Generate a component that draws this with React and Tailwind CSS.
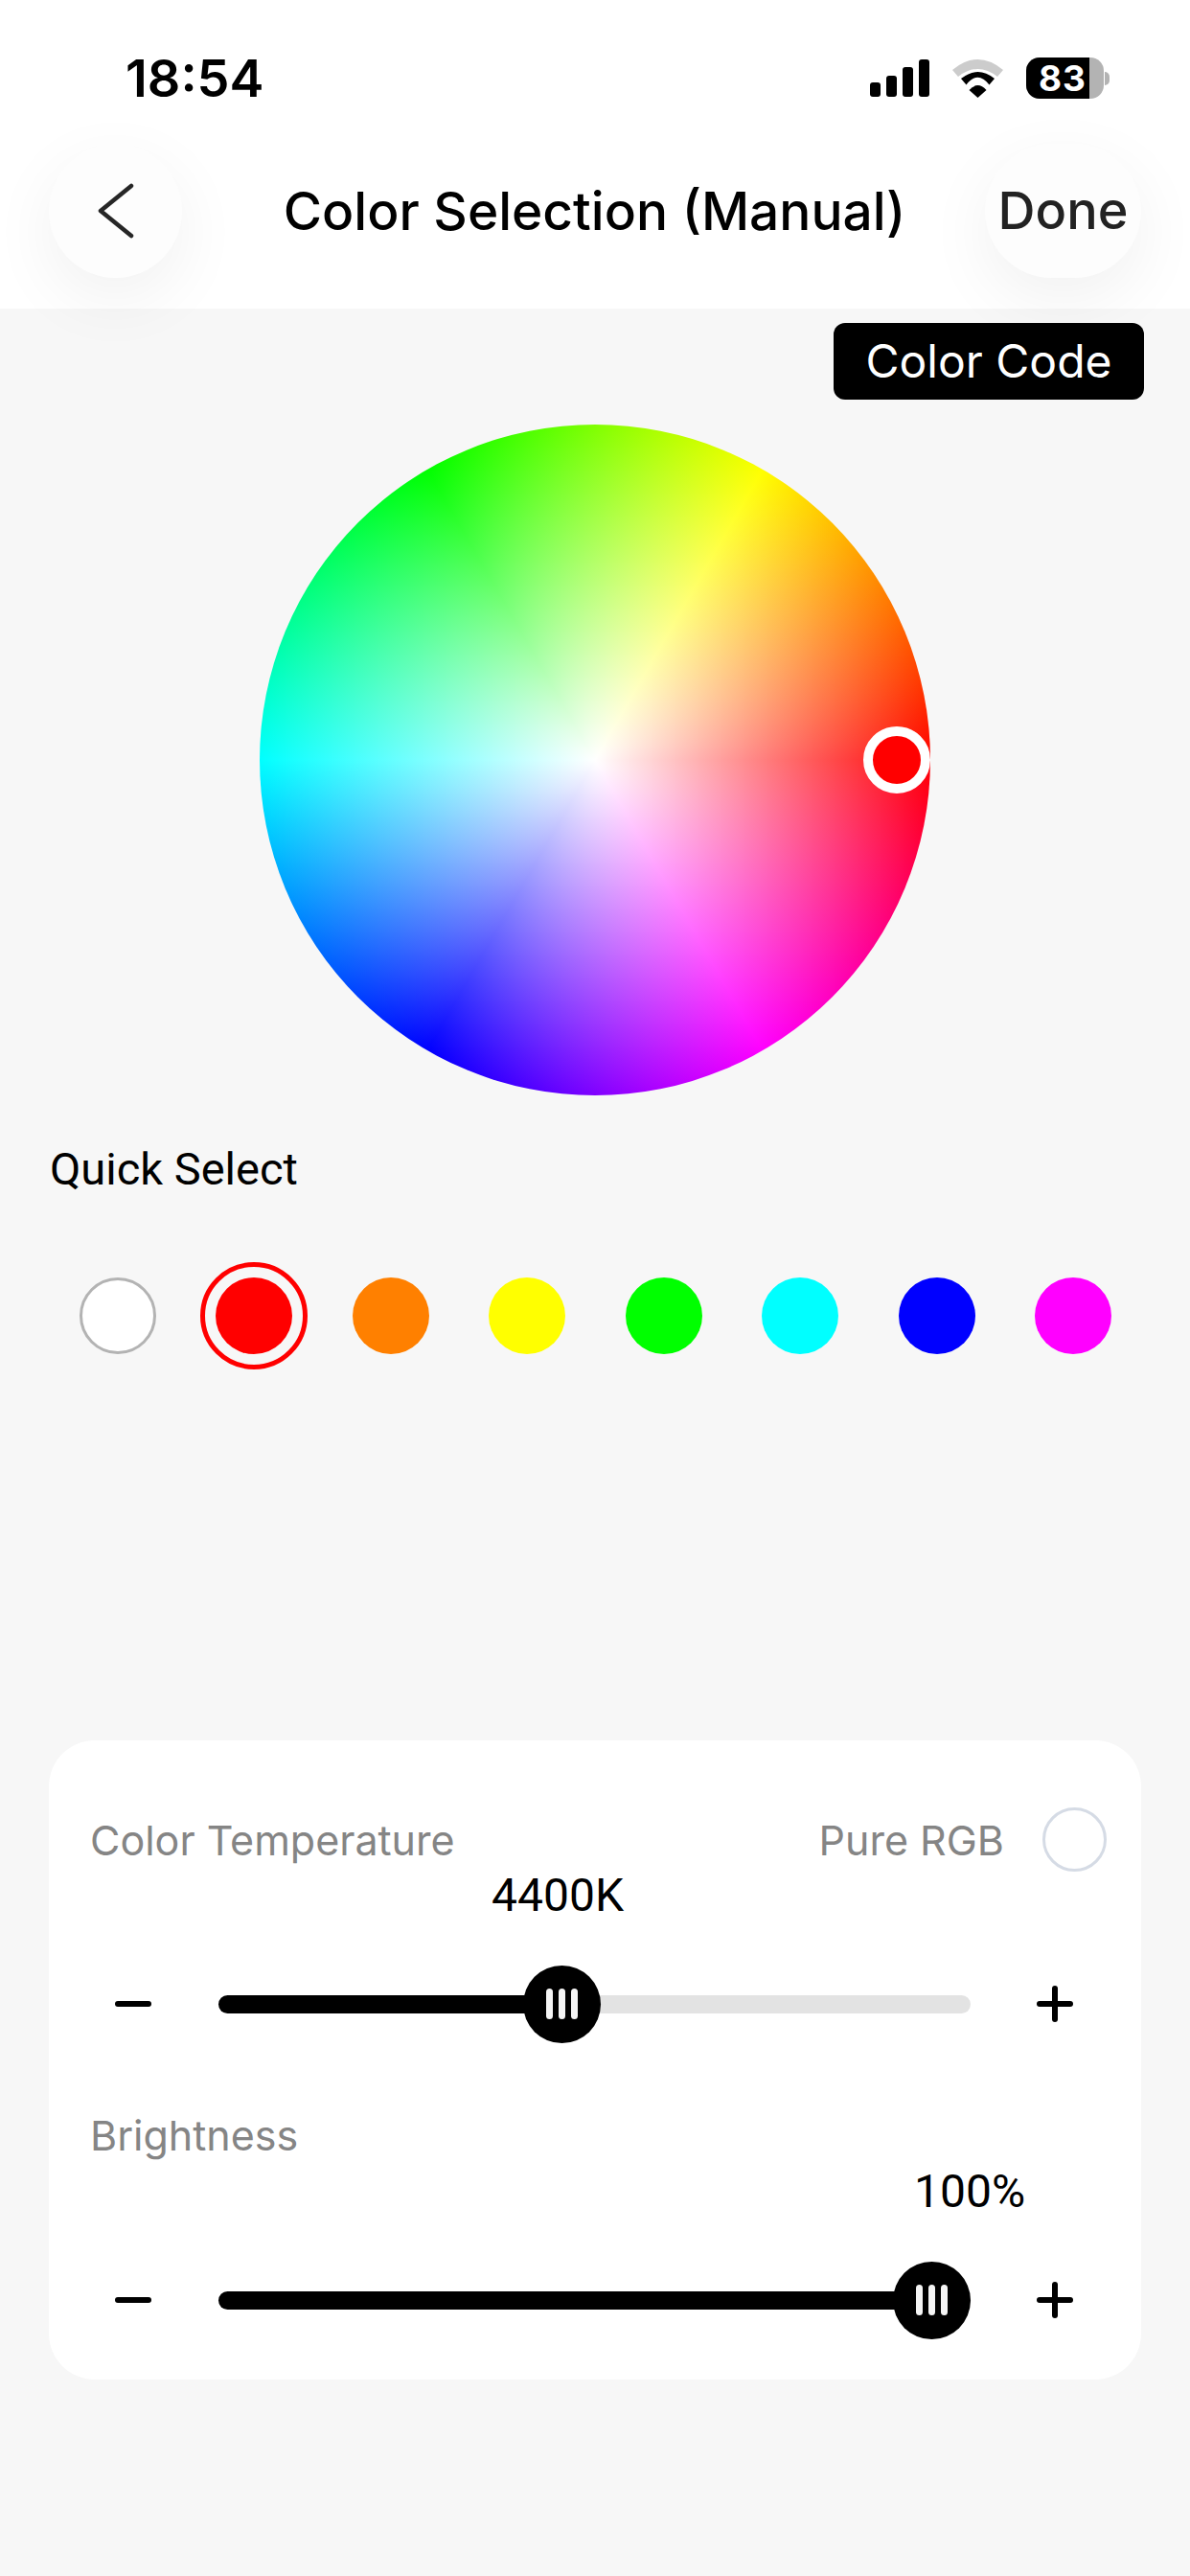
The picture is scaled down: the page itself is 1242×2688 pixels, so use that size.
const swatches = [
  { name: 'white', className: 'bg-white border-[3px] border-[#b3b3b3]' },
  { name: 'red', className: 'bg-[#ff0000] outline-[5px] outline-offset-[11px] outline-[#ff0000]' },
  { name: 'orange', className: 'bg-[#ff8000]' },
  { name: 'yellow', className: 'bg-[#ffff00]' },
  { name: 'green', className: 'bg-[#00ff00]' },
  { name: 'cyan', className: 'bg-[#00ffff]' },
  { name: 'blue', className: 'bg-[#0000ff]' },
  { name: 'magenta', className: 'bg-[#ff00ff]' },
];

function StatusBar() {
  return (
    <div className="flex h-[43px] items-center justify-between pl-[131px] pr-[84px]">
      <span className="text-[54px] font-semibold leading-[43px] text-black">18:54</span>
      <div className="flex items-center">
        <svg width="62" height="39" viewBox="0 0 62 39" fill="#000">
          <rect x="0" y="24" width="11" height="15" rx="3" />
          <rect x="17" y="17" width="11" height="22" rx="3" />
          <rect x="34" y="8" width="11" height="31" rx="3" />
          <rect x="51" y="0" width="11" height="39" rx="3" />
        </svg>
        <svg className="ml-[24px]" width="53" height="40" viewBox="0 0 53 40">
          <path d="M0 11Q26.5 -11 53 11L47 18Q26.5 2 6 18Z" fill="#cccccc" />
          <path d="M9 20Q26.5 6 44 20L38.5 26.5Q26.5 11 14.5 26.5Z" fill="#000" />
          <path d="M17.5 32Q26.5 22 35.5 32L26.5 40Z" fill="#000" />
        </svg>
        <div className="ml-[24px] flex items-center">
          <div className="flex h-[43px] w-[81px] overflow-hidden rounded-[14px] bg-[#b3b3b3]">
            <div className="flex w-[66px] items-center justify-center bg-black pl-[10px] text-[37px] font-bold leading-none tracking-[1px] text-white">
              83
            </div>
          </div>
          <div className="ml-[1px] h-[14px] w-[5px] rounded-r-full bg-[#b3b3b3]" />
        </div>
      </div>
    </div>
  );
}

function Header() {
  return (
    <div className="relative h-[322px] shrink-0 bg-white pt-[60px]">
      <StatusBar />
      <div className="mt-[47px] flex h-[140px] items-center px-[51px]">
        <button className="flex h-[140px] w-[139px] items-center justify-center rounded-full bg-[#fdfdfd] shadow-[0_22px_70px_rgba(0,0,0,0.06)]">
          <svg width="38" height="58" viewBox="0 0 38 58" fill="none" stroke="#262626" strokeWidth="4.5" strokeLinecap="round" strokeLinejoin="round">
            <path d="M35 3L3 29L35 55" />
          </svg>
        </button>
        <div className="flex-1 pl-[23px] text-center text-[55px] font-medium leading-[70px] text-black">
          Color Selection (Manual)
        </div>
        <button className="flex h-[140px] w-[163px] items-center justify-center rounded-full bg-[#fdfdfd] text-[54px] font-medium leading-[70px] text-[#222222] shadow-[0_22px_70px_rgba(0,0,0,0.06)]">
          Done
        </button>
      </div>
    </div>
  );
}

function ColorWheel() {
  return (
    <div className="relative mt-[26px] h-[700px] w-[700px] self-center overflow-hidden rounded-full bg-[conic-gradient(from_30deg,#ffff00,#ff0000,#ff00ff,#0000ff,#00ffff,#00ff00,#ffff00)]">
      <div className="h-full w-full rounded-full bg-[radial-gradient(circle_closest-side,#ffffff,rgba(255,255,255,0))]" />
      <div className="absolute left-[630px] top-[315px] h-[70px] w-[70px] rounded-full border-[10px] border-white bg-[#ff0000]" />
    </div>
  );
}

function Slider({ valueClass, value, fillClass, thumbClass }) {
  return (
    <>
      <div className={`text-[48px] leading-[40px] text-black ${valueClass}`} style={{ fontFamily: 'Roboto, sans-serif' }}>
        {value}
      </div>
      <div className="mt-[52px] flex h-[82px] items-center pl-[69px]">
        <div className="h-[6px] w-[38px] rounded-full bg-black" />
        <div className="relative ml-[70px] h-[19px] w-[785px] rounded-full bg-[#e3e3e3]">
          <div className={`h-full rounded-full bg-black ${fillClass}`} />
          <div className={`absolute top-[-31px] flex h-[81px] w-[81px] items-center justify-center gap-[6px] rounded-full bg-black ${thumbClass}`}>
            <div className="h-[32px] w-[7px] rounded-full bg-[#f5f5f5]" />
            <div className="h-[32px] w-[7px] rounded-full bg-[#f5f5f5]" />
            <div className="h-[32px] w-[7px] rounded-full bg-[#f5f5f5]" />
          </div>
        </div>
        <svg className="ml-[69px]" width="38" height="38" viewBox="0 0 38 38" fill="#000">
          <rect x="0" y="16" width="38" height="6" rx="3" />
          <rect x="16" y="0" width="6" height="38" rx="3" />
        </svg>
      </div>
    </>
  );
}

export default function App() {
  return (
    <div className="flex min-h-[2688px] w-[1242px] flex-col bg-[#f7f7f7]" style={{ fontFamily: 'Inter, sans-serif' }}>
      <Header />

      <button className="relative mr-[48px] mt-[15px] flex h-[80px] w-[324px] items-center justify-center self-end rounded-[12px] bg-black text-[48px] leading-none text-white">
        Color Code
      </button>

      <ColorWheel />

      <div className="ml-[52px] mt-[47px] text-[47px] leading-[60px] text-black" style={{ fontFamily: 'Roboto, sans-serif' }}>
        Quick Select
      </div>

      <div className="mt-[83px] flex justify-between pl-[83px] pr-[82px]">
        {swatches.map((s) => (
          <div key={s.name} className={`h-20 w-20 rounded-full ${s.className}`} />
        ))}
      </div>

      <div className="mx-[51px] mt-[403px] rounded-[48px] bg-white pb-[42px] pt-[70px]">
        <div className="flex h-[67px] items-center justify-between pl-[43px] pr-[36px] text-[43px] leading-[60px] text-[#858585]">
          <span>Color Temperature</span>
          <div className="flex items-center">
            <span>Pure RGB</span>
            <div className="ml-[40px] h-[67px] w-[67px] rounded-full border-[3px] border-[#d5dbe5]" />
          </div>
        </div>
        <div className="mt-[5px]">
          <Slider valueClass="pl-[462px]" value="4400K" fillClass="w-[340px]" thumbClass="left-[318px]" />
        </div>
        <div className="mt-[66px] pl-[43px] text-[43px] leading-[60px] text-[#858585]">Brightness</div>
        <div className="mt-[9px]">
          <Slider valueClass="pl-[903px]" value="100%" fillClass="w-[740px]" thumbClass="left-[704px]" />
        </div>
      </div>
    </div>
  );
}
